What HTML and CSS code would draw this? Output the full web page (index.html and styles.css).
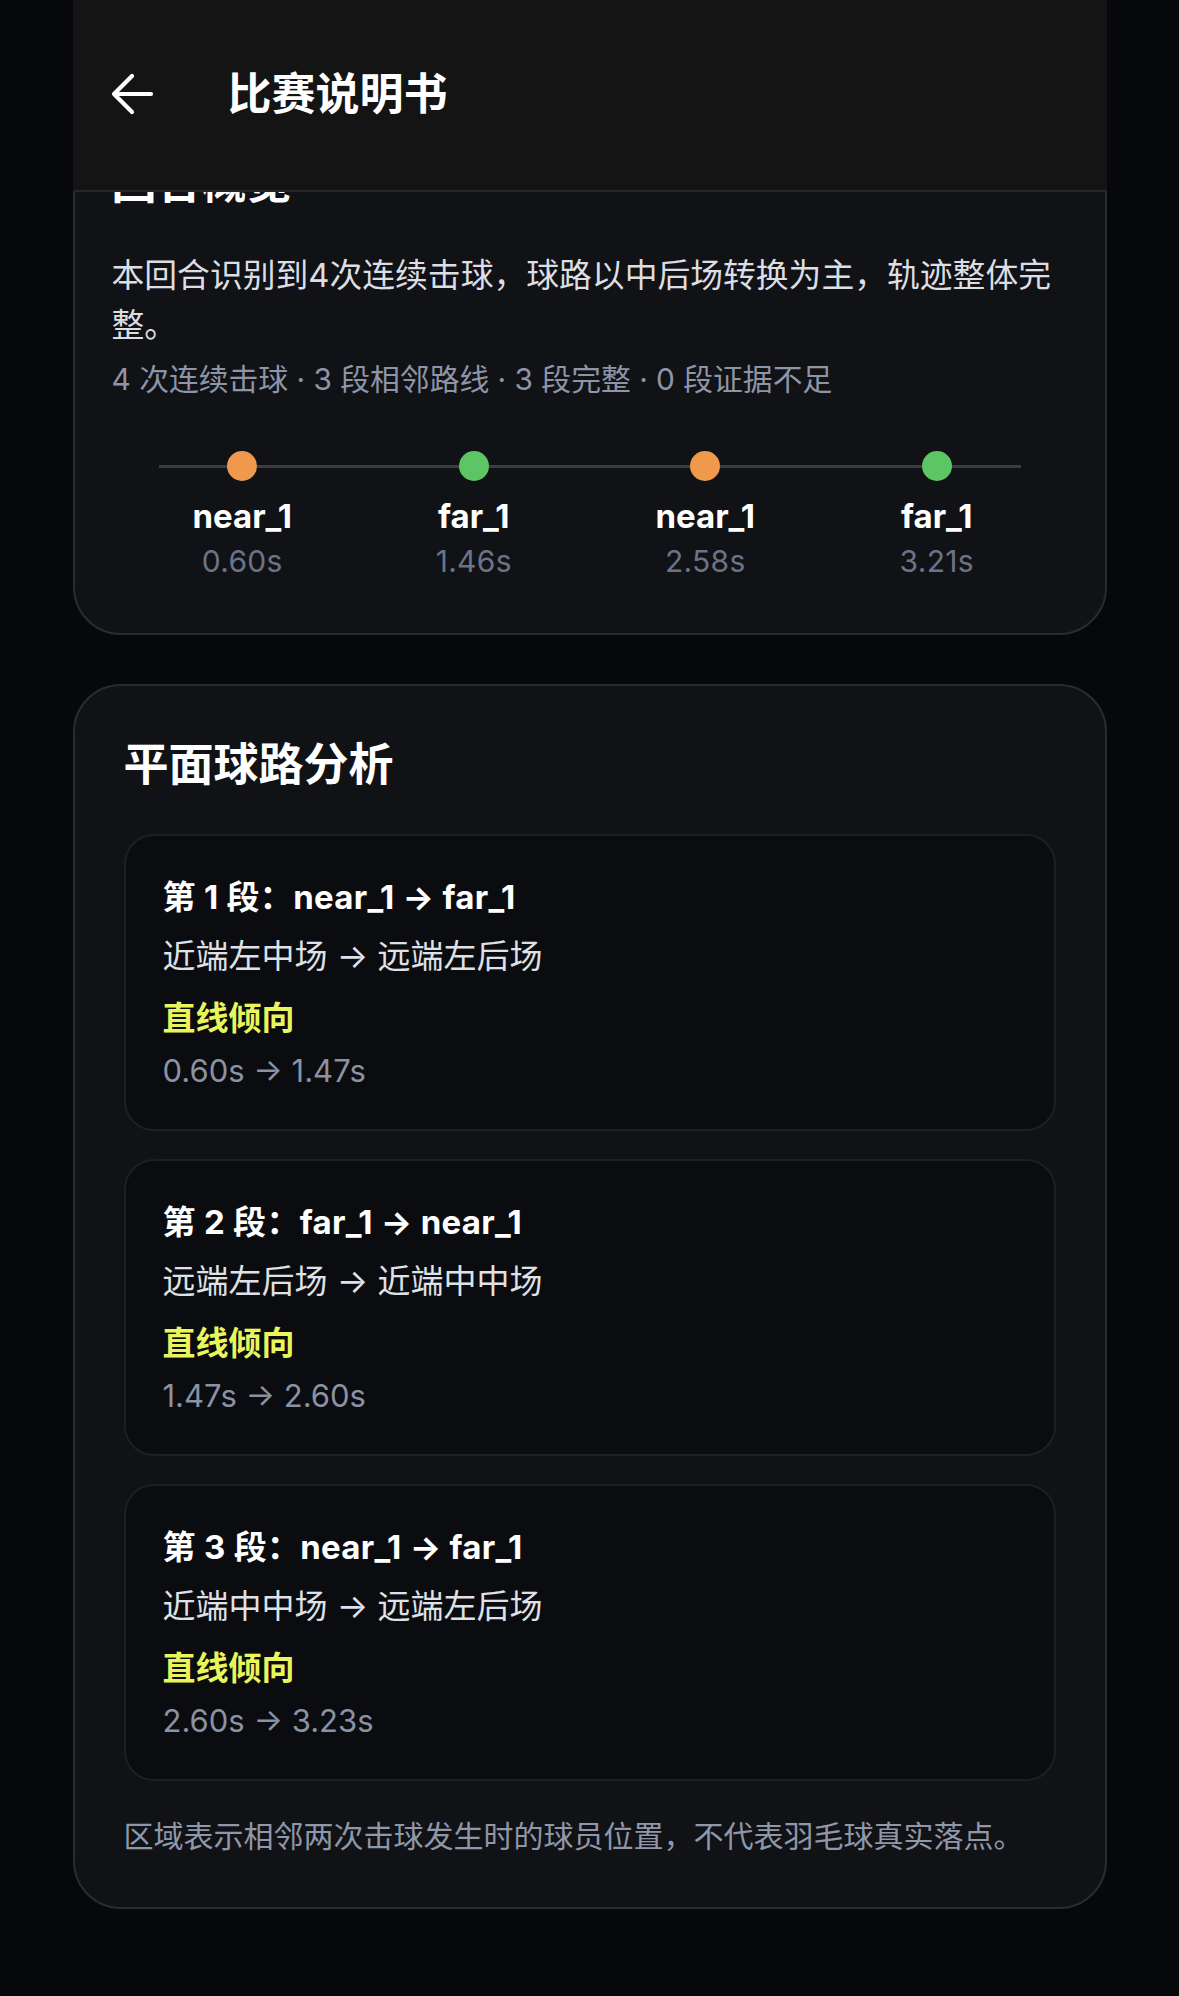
FILE: index.html
```html
<!DOCTYPE html>
<html lang="zh-CN">
<head>
    <meta charset="UTF-8">
    <meta name="viewport" content="width=device-width, initial-scale=1.0">
    <title>比赛说明书</title>
    <link rel="stylesheet" href="styles.css">
</head>
<body>
    <div class="shell">
        <header class="top-bar">
            <svg class="back-icon" width="44" height="44" viewBox="0 0 44 44" fill="none" stroke="#ffffff" stroke-width="4.2" stroke-linecap="round" stroke-linejoin="round">
                <path d="M41 22H4M22 4 4 22l18 18"/>
            </svg>
            <h1>比赛说明书</h1>
        </header>

        <main class="content">
            <section class="card overview">
                <h2>回合概览</h2>
                <p class="summary">本回合识别到4次连续击球，球路以中后场转换为主，轨迹整体完整。</p>
                <p class="stats">4 次连续击球 · 3 段相邻路线 · 3 段完整 · 0 段证据不足</p>

                <div class="timeline">
                    <div class="hit">
                        <span class="dot near"></span>
                        <span class="player">near_1</span>
                        <span class="time">0.60s</span>
                    </div>
                    <div class="hit">
                        <span class="dot far"></span>
                        <span class="player">far_1</span>
                        <span class="time">1.46s</span>
                    </div>
                    <div class="hit">
                        <span class="dot near"></span>
                        <span class="player">near_1</span>
                        <span class="time">2.58s</span>
                    </div>
                    <div class="hit">
                        <span class="dot far"></span>
                        <span class="player">far_1</span>
                        <span class="time">3.21s</span>
                    </div>
                </div>
            </section>

            <section class="card routes">
                <h2>平面球路分析</h2>

                <div class="segment">
                    <div class="seg-title">第 1 段：near_1 → far_1</div>
                    <div class="seg-route">近端左中场 → 远端左后场</div>
                    <div class="seg-tag">直线倾向</div>
                    <div class="seg-time">0.60s → 1.47s</div>
                </div>

                <div class="segment">
                    <div class="seg-title">第 2 段：far_1 → near_1</div>
                    <div class="seg-route">远端左后场 → 近端中中场</div>
                    <div class="seg-tag">直线倾向</div>
                    <div class="seg-time">1.47s → 2.60s</div>
                </div>

                <div class="segment">
                    <div class="seg-title">第 3 段：near_1 → far_1</div>
                    <div class="seg-route">近端中中场 → 远端左后场</div>
                    <div class="seg-tag">直线倾向</div>
                    <div class="seg-time">2.60s → 3.23s</div>
                </div>

                <p class="note">区域表示相邻两次击球发生时的球员位置，不代表羽毛球真实落点。</p>
            </section>
        </main>
    </div>
</body>
</html>
```

FILE: styles.css
```css
body {
    margin: 0;
    background-color: #07080b;
    color: #ffffff;
    font-family: Inter, "Noto Sans CJK SC", sans-serif;
    height: 1996px;
    overflow: hidden;
}

.shell {
    position: relative;
    width: 1034px;
    margin: 0 auto;
}

/* header sits over the scrolled content */
.top-bar {
    position: absolute;
    top: 0;
    left: 0;
    right: 0;
    z-index: 2;
    height: 192px;
    display: flex;
    align-items: center;
    padding-left: 37px;
    padding-bottom: 2px;
    box-sizing: border-box;
    background-color: #141414;
    border-bottom: 2px solid #24262a;
}

.back-icon {
    flex: none;
}

.top-bar h1 {
    margin: 0 0 0 74px;
    font-size: 44px;
    line-height: 57px;
    font-weight: 700;
    color: #ffffff;
}

.content {
    padding-top: 106px;
}

.card {
    background-color: #111216;
    border: 2px solid #2a2c31;
    border-radius: 48px;
}

.card h2 {
    margin: 0;
    font-size: 45px;
    line-height: 57px;
    font-weight: 700;
    color: #ffffff;
}

.overview {
    padding: 46px 37px 54px;
}

.summary {
    margin: 39px 0 0;
    font-size: 32.8px;
    line-height: 50px;
    color: #dcdee3;
}

.stats {
    margin: 9px 0 0;
    font-size: 29.8px;
    line-height: 40px;
    color: #8d95a7;
}

.timeline {
    position: relative;
    display: grid;
    grid-template-columns: repeat(4, 1fr);
    margin: 52px 15px 0;
}

.timeline::before {
    content: "";
    position: absolute;
    left: 32px;
    right: 32px;
    top: 14px;
    height: 3px;
    background-color: #3a3c41;
}

.hit {
    position: relative;
    display: flex;
    flex-direction: column;
    align-items: center;
}

.dot {
    width: 30px;
    height: 30px;
    border-radius: 50%;
}

.dot.near {
    background-color: #f0994d;
}

.dot.far {
    background-color: #5cc564;
}

.player {
    margin-top: 15px;
    font-size: 33px;
    line-height: 40px;
    font-weight: 700;
    color: #ffffff;
}

.time {
    margin-top: 7px;
    font-size: 30px;
    line-height: 36px;
    letter-spacing: 0.3px;
    color: #6b7487;
}

.routes {
    margin-top: 49px;
    padding: 50px 49px 51px;
}

.segment {
    display: flex;
    flex-direction: column;
    margin-top: 28px;
    padding: 39px 37px 38px;
    background-color: #0b0c0f;
    border: 2px solid #1d1f23;
    border-radius: 30px;
}

.routes h2 + .segment {
    margin-top: 41px;
}

.seg-title {
    font-size: 33px;
    line-height: 44px;
    font-weight: 700;
    letter-spacing: 0.3px;
    color: #ffffff;
}

.seg-route {
    margin-top: 15px;
    font-size: 33px;
    line-height: 44px;
    color: #dfe1e6;
}

.seg-tag {
    margin-top: 18px;
    font-size: 33px;
    line-height: 44px;
    font-weight: 700;
    color: #e8f65c;
}

.seg-time {
    margin-top: 11px;
    font-size: 31px;
    line-height: 40px;
    color: #8a92a4;
}

.note {
    margin: 35px 0 0;
    font-size: 30px;
    line-height: 40px;
    color: #9097a8;
}
```
